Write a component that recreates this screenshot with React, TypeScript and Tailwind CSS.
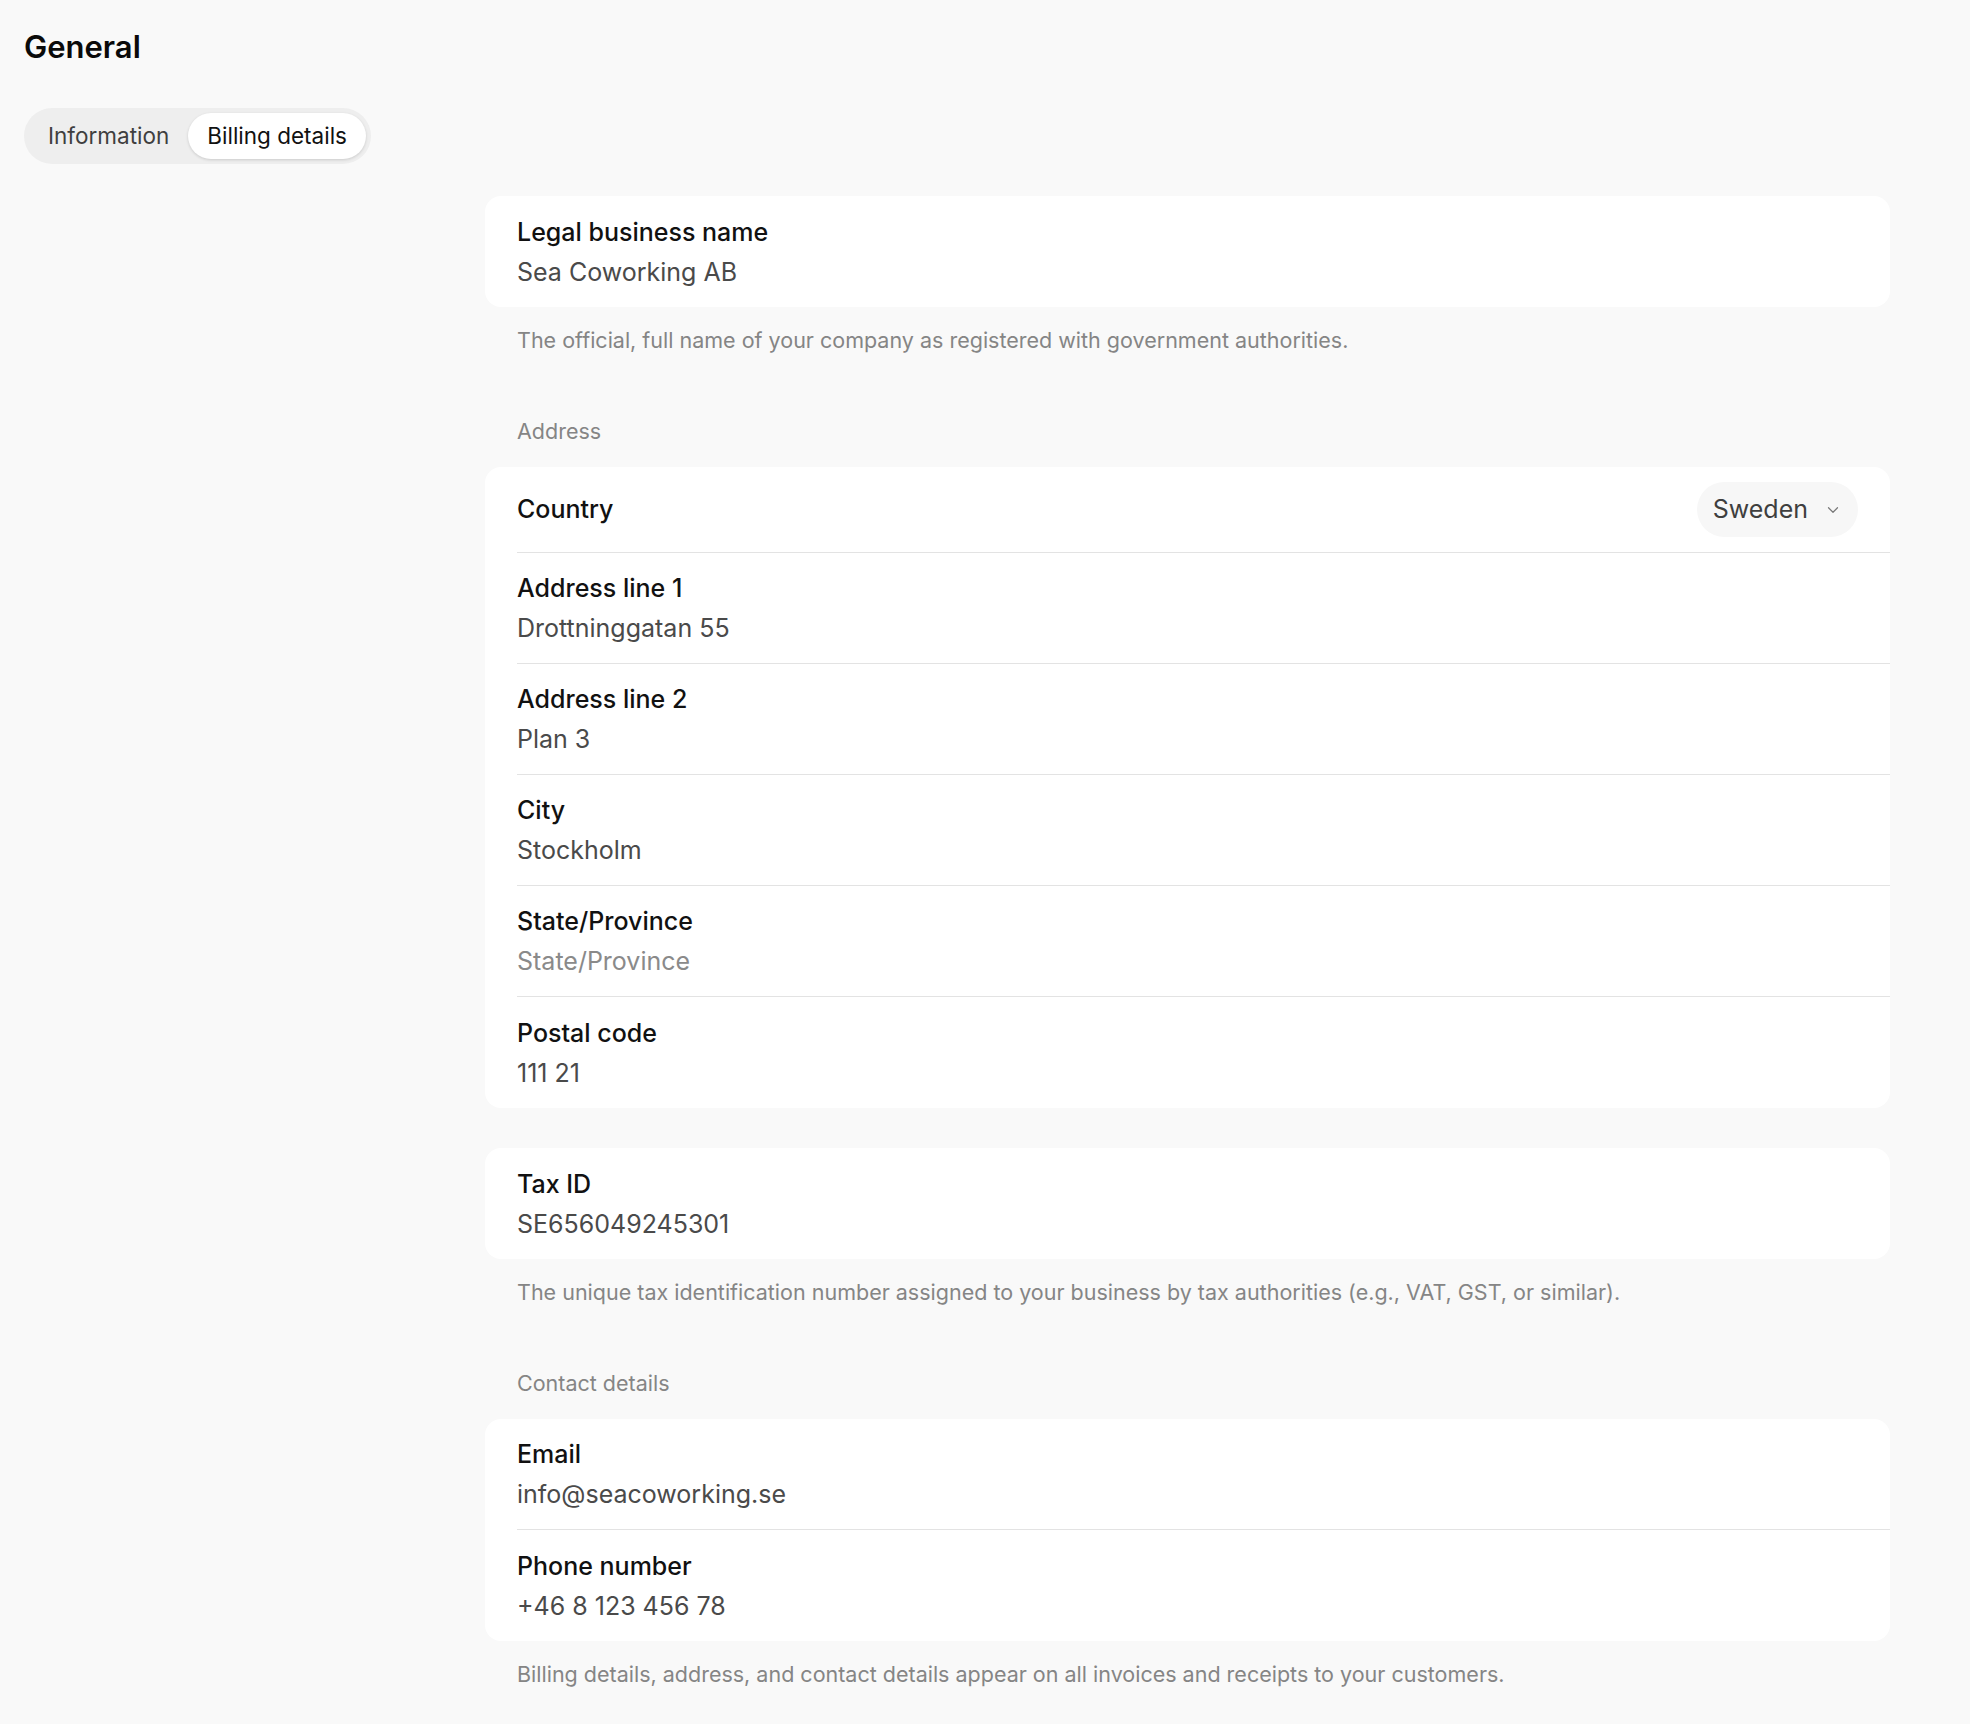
const Row = ({ label, value, muted, last }: { label: string; value: string; muted?: boolean; last?: boolean }) => (
  <div className="pl-8">
    <div className={`flex flex-col justify-center h-[111px] ${last ? "" : "border-b border-[#e3e3e3]"}`}>
      <div className="text-[25px] leading-[40px] font-medium text-[#111]">{label}</div>
      <div className={`text-[25px] leading-[40px] ${muted ? "text-[#8a8a8a]" : "text-[#4a4a4a]"}`}>{value}</div>
    </div>
  </div>
);

const Card = ({ children }: { children: React.ReactNode }) => (
  <div className="bg-white rounded-[16px]">{children}</div>
);

const Help = ({ children }: { children: React.ReactNode }) => (
  <p className="px-8 pt-[19px] text-[21.5px] leading-7 text-[#858585]">{children}</p>
);

const Section = ({ children }: { children: React.ReactNode }) => (
  <p className="px-8 pt-[63px] pb-[22px] text-[21.5px] leading-7 text-[#858585]">{children}</p>
);

export default function App() {
  return (
    <div className="min-h-[1724px] bg-[#f9f9f9] font-[Inter] px-6 pt-[28px]">
      <h1 className="text-[31px] leading-[38px] font-semibold text-[#0a0a0a]">General</h1>
      <div className="mt-[42px] inline-flex items-center h-[56px] rounded-full bg-[#eeeeee] p-[5px]">
        <button className="px-[19px] h-full text-[22.5px] text-[#3f3f3f]">Information</button>
        <button className="px-[19px] h-full rounded-full bg-white text-[22.5px] text-[#111] shadow-[0_1px_3px_rgba(0,0,0,0.15)]">
          Billing details
        </button>
      </div>

      <div className="ml-[461px] mr-[56px] mt-[32px] pb-10">
        <Card>
          <Row label="Legal business name" value="Sea Coworking AB" last />
        </Card>
        <Help>The official, full name of your company as registered with government authorities.</Help>

        <Section>Address</Section>
        <Card>
          <div className="pl-8">
            <div className="flex items-center justify-between h-[86px] border-b border-[#e3e3e3] pr-[32px]">
              <span className="text-[25px] font-medium text-[#111]">Country</span>
              <div className="flex items-center gap-4 h-[55px] rounded-full bg-[#f7f7f7] px-[16px] text-[25px] text-[#3f3f3f]">
                Sweden
                <svg width="18" height="18" viewBox="0 0 24 24" fill="none" stroke="#777" strokeWidth="1.6" strokeLinecap="round" strokeLinejoin="round">
                  <path d="M6 9l6 6 6-6" />
                </svg>
              </div>
            </div>
          </div>
          <Row label="Address line 1" value="Drottninggatan 55" />
          <Row label="Address line 2" value="Plan 3" />
          <Row label="City" value="Stockholm" />
          <Row label="State/Province" value="State/Province" muted />
          <Row label="Postal code" value="111 21" last />
        </Card>

        <div className="mt-[40px]">
          <Card>
            <Row label="Tax ID" value="SE656049245301" last />
          </Card>
        </div>
        <Help>The unique tax identification number assigned to your business by tax authorities (e.g., VAT, GST, or similar).</Help>

        <Section>Contact details</Section>
        <Card>
          <Row label="Email" value="info@seacoworking.se" />
          <Row label="Phone number" value="+46 8 123 456 78" last />
        </Card>
        <Help>Billing details, address, and contact details appear on all invoices and receipts to your customers.</Help>
      </div>
    </div>
  );
}
